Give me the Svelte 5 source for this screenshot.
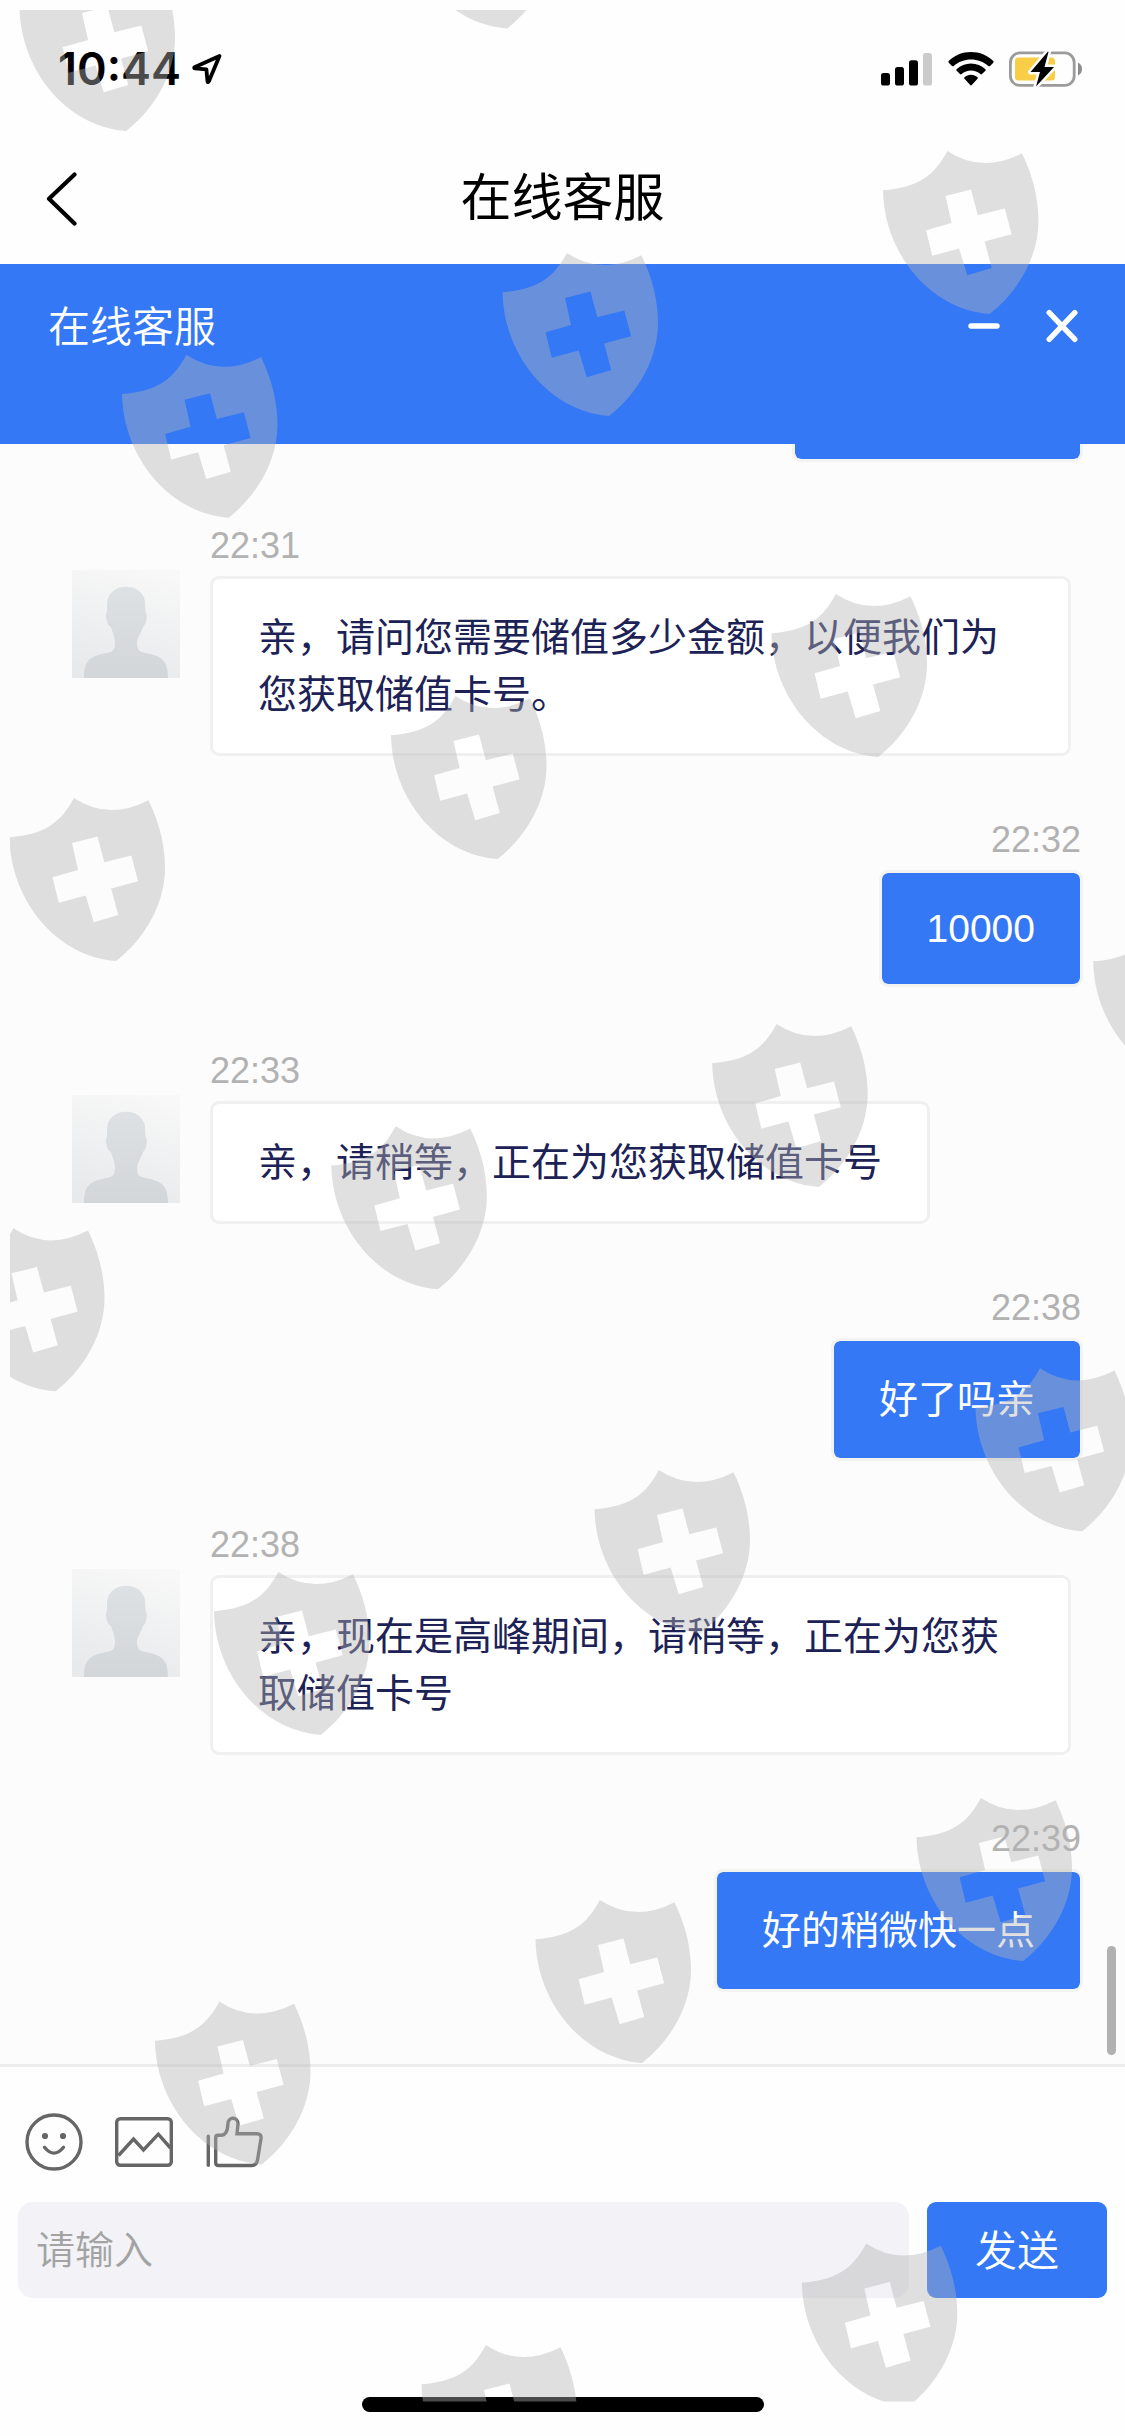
<script lang="ts">
	type Message = { from: 'agent' | 'me'; time: string; text: string; latin?: boolean };

	const messages: Message[] = [
		{ from: 'agent', time: '22:31', text: '亲，请问您需要储值多少金额，以便我们为您获取储值卡号。' },
		{ from: 'me', time: '22:32', text: '10000', latin: true },
		{ from: 'agent', time: '22:33', text: '亲，请稍等，正在为您获取储值卡号' },
		{ from: 'me', time: '22:38', text: '好了吗亲' },
		{ from: 'agent', time: '22:38', text: '亲，现在是高峰期间，请稍等，正在为您获取储值卡号' },
		{ from: 'me', time: '22:39', text: '好的稍微快一点' }
	];

	// ── shield overlay, offsets of each stamp ────────────────────────────────
	const shields = [
		[19.5, -32],
		[400.5, -134.5],
		[883, 151],
		[502.5, 253],
		[122, 354.7],
		[771.5, 594],
		[391, 696],
		[9.5, 798],
		[1093.2, 922],
		[712.2, 1024],
		[331.3, 1126.3],
		[-51, 1228.3],
		[975.5, 1368.3],
		[594.5, 1470],
		[214, 1572],
		[916.5, 1798],
		[535.5, 1900],
		[155, 2001.5],
		[801.8, 2243.5],
		[421.5, 2345]
	];

	let draft = $state('');
</script>

<div class="phone">
	<!-- status bar -->
	<div class="status">
		<span class="clock">10:44</span>
		<svg class="location" width="32" height="34" viewBox="0 0 32 34">
			<path d="M28.5 4 L3.5 15.2 Q2.6 16 4 16.3 L15.4 17.4 L16.5 29.5 Q17 30.8 17.8 29.4 Z" />
		</svg>
		<div class="indicators">
			<svg width="52" height="34" viewBox="0 0 52 34">
				<rect x="0" y="21" width="9" height="12.5" rx="2.6" />
				<rect x="14" y="15" width="9" height="18.5" rx="2.6" />
				<rect x="28" y="8.3" width="9" height="25.2" rx="2.6" />
				<rect x="42" y="1" width="9" height="32.5" rx="2.6" fill="#cbcbcb" />
			</svg>
			<svg width="46" height="34" viewBox="0 0 46 34">
				<path d="M23 0 C31.500 0 39.500 3.300 45.300 9 Q46 9.900 45.300 10.700 L42 14 Q41.200 14.700 40.300 14 C35.600 9.700 29.500 7.400 23 7.400 C16.500 7.400 10.400 9.700 5.700 14 Q4.800 14.700 4 14 L0.700 10.700 Q0 9.900 0.700 9 C6.500 3.300 14.500 0 23 0 Z" />
				<path d="M23 11.400 C28.500 11.400 33.500 13.500 37.400 17.200 Q38.200 18 37.400 18.800 L34 22.100 Q33.200 22.800 32.400 22.100 C29.800 19.900 26.500 18.600 23 18.600 C19.500 18.600 16.200 19.900 13.600 22.100 Q12.800 22.800 12 22.100 L8.600 18.800 Q7.800 18 8.600 17.200 C12.500 13.500 17.500 11.400 23 11.400 Z" />
				<path d="M23 22.800 C25.500 22.800 27.700 23.700 29.500 25.200 Q30.300 26 29.500 26.800 L23.800 33 Q23 33.800 22.200 33 L16.500 26.800 Q15.700 26 16.500 25.200 C18.300 23.700 20.500 22.800 23 22.800 Z" />
			</svg>
			<svg width="74" height="36" viewBox="0 0 74 36">
				<rect x="1.400" y="1.900" width="63.800" height="32.500" rx="9.500" fill="none" stroke="#9b9b9b" stroke-width="2.800" />
				<path d="M69 11.500 Q73 13.500 73 18 Q73 22.500 69 24.500 Z" fill="#8c8c8c" />
				<rect x="6" y="6.600" width="40" height="23" rx="3.500" fill="#f8ce46" />
				<path class="bolt" d="M39 0.500 L21.500 21 L31 21 L27 35.500 L45 16 L35.500 16 L39.500 1 Z" />
			</svg>
		</div>
	</div>

	<!-- page title -->
	<div class="nav">
		<button class="back" aria-label="返回">
			<svg width="34" height="56" viewBox="0 0 34 56">
				<path d="M29.500 4.500 L4 28.800 L29.500 53.500" />
			</svg>
		</button>
		<h1>在线客服</h1>
	</div>

	<!-- chat header -->
	<div class="chat-header">
		<span class="chat-title">在线客服</span>
		<div class="window-actions">
			<button aria-label="最小化">
				<svg width="34" height="34" viewBox="0 0 34 34"><path d="M4 17 H30" /></svg>
			</button>
			<button aria-label="关闭">
				<svg width="34" height="34" viewBox="0 0 34 34"><path d="M4.200 3.700 L29.800 30.300 M29.800 3.700 L4.200 30.300" /></svg>
			</button>
		</div>
	</div>

	<!-- messages -->
	<div class="messages">
		<div class="scrolled-bubble"></div>
		{#each messages as m}
			<div class="message {m.from}">
				{#if m.from === 'agent'}
					<svg class="avatar" width="108" height="108" viewBox="0 0 108 108">
						<defs>
							<linearGradient id="photo" x1="0.700" y1="0" x2="0.400" y2="1">
								<stop offset="0" stop-color="#f8f8f8" />
								<stop offset="1" stop-color="#e7e9eb" />
							</linearGradient>
							<linearGradient id="person" x1="0" y1="0" x2="0" y2="1">
								<stop offset="0" stop-color="#dde1e4" />
								<stop offset="1" stop-color="#d2d6d9" />
							</linearGradient>
						</defs>
						<rect width="108" height="108" fill="url(#photo)" />
						<path
							fill="url(#person)"
							d="M51 17 C60 16 71 20 73 31 L73.500 42 Q75.500 44 74.500 49 Q73.500 55 71 57 C69 64 65 67 65 73 C65 82 69 82 78 84 C91 87 96 92 96 108 L12 108 C12 92 17 87 30 84 C39 82 43 82 43 73 C43 67 41 64 39 57 Q34.500 54 34.500 49 Q33 44 35 42 L35 33 C36 24 42 18 51 17 Z"
						/>
					</svg>
				{/if}
				<div class="content">
					<time>{m.time}</time>
					<div class="bubble" class:latin={m.latin}>{m.text}</div>
				</div>
			</div>
		{/each}
		<div class="scrollbar"></div>
	</div>

	<!-- composer -->
	<div class="composer">
		<div class="tools">
			<button aria-label="表情">
				<svg width="60" height="60" viewBox="0 0 60 60">
					<circle cx="30" cy="30" r="27" />
					<circle class="eye" cx="21" cy="24" r="3.100" />
					<circle class="eye" cx="39" cy="24" r="3.100" />
					<path d="M20.500 35.200 Q30 47 39.500 35.200" stroke-linecap="round" />
				</svg>
			</button>
			<button aria-label="图片">
				<svg width="60" height="60" viewBox="0 0 60 60">
					<rect x="2.700" y="6.700" width="54.600" height="46.600" rx="3.500" />
					<path d="M4.500 43.500 L19.500 27 L29.500 38 L44.300 22.200 L56.500 36" />
				</svg>
			</button>
			<button aria-label="点赞">
				<svg width="60" height="60" viewBox="0 0 60 60">
					<path d="M4.300 24.200 V53.200" stroke-linecap="round" />
					<path d="M14 23.300 H17 C22 23.300 23.700 17.500 23.900 12 C24 4.300 34 4.500 34 12 L33 21.700 H53 Q57.500 21.700 57 26.500 L53.500 48 Q52.500 53.500 47.500 53.500 H14.500 Q11.700 53.500 11.700 50.500 V26 Q11.700 23.300 14 23.300 Z" />
				</svg>
			</button>
		</div>
		<div class="entry">
			<input type="text" placeholder="请输入" bind:value={draft} />
			<button class="send">发送</button>
		</div>
	</div>

	<div class="home-indicator"></div>

	<svg class="overlay" width="1125" height="2436" viewBox="0 0 1125 2436" aria-hidden="true">
		<defs>
			<clipPath id="overlay-area"><rect x="10" y="10" width="1115" height="2391.500" /></clipPath>
		</defs>
		<g clip-path="url(#overlay-area)">
			{#each shields as [x, y]}
				<path
					transform="translate({x} {y})"
					fill-rule="evenodd"
					d="M64.400 0 Q99 23 139 2.300 C151 27 155.500 50 155.500 70 C155.500 105 136 140 106.700 163 C48 159 1 103 0 39.300 C35 36.500 51 25 64.400 0 Z M62.500 45 L88 38.600 L94.800 64.300 L121.800 57.500 L128.600 83.300 L101.600 90.600 L108.800 117 L84.200 124.300 L76.200 97.600 L49.200 104.700 L43.100 79.300 L68.600 72 Z"
				/>
			{/each}
		</g>
	</svg>
</div>

<style>
	:global(body) {
		margin: 0;
		background: #fff;
	}

	.phone {
		position: relative;
		display: flex;
		flex-direction: column;
		width: 1125px;
		height: 2436px;
		overflow: hidden;
		background: #fefefe;
		font-family: 'Liberation Sans', 'Noto Sans CJK SC', sans-serif;
	}

	button {
		display: flex;
		padding: 0;
		border: none;
		background: none;
		font: inherit;
	}

	/* ── status bar ── */
	.status {
		display: flex;
		align-items: center;
		box-sizing: border-box;
		height: 132px;
		padding: 6px 42px 0 58px;
		flex-shrink: 0;
	}

	.clock {
		margin-top: -2px;
		font-family: Inter, sans-serif;
		font-size: 45px;
		font-weight: 600;
		letter-spacing: 0;
	}

	.location {
		margin-left: 10px;
		fill: none;
		stroke: #000;
		stroke-width: 3.8;
		stroke-linejoin: round;
	}

	.indicators {
		display: flex;
		align-items: center;
		gap: 15px;
		margin-left: auto;
	}

	.bolt {
		stroke: #fefefe;
		stroke-width: 5;
		stroke-linejoin: round;
		paint-order: stroke;
	}

	/* ── title row ── */
	.nav {
		display: flex;
		align-items: center;
		justify-content: center;
		position: relative;
		height: 132px;
		flex-shrink: 0;
	}

	.back {
		position: absolute;
		left: 45px;
	}

	.back svg {
		fill: none;
		stroke: #000;
		stroke-width: 4.2;
		stroke-linecap: round;
		stroke-linejoin: round;
	}

	h1 {
		margin: 2px 0 0;
		font-size: 51px;
		font-weight: 400;
		line-height: 72px;
	}

	/* ── chat header ── */
	.chat-header {
		display: flex;
		justify-content: space-between;
		box-sizing: border-box;
		height: 180px;
		padding: 32px 46px 0 48px;
		background: #3478f6;
		color: #fff;
		flex-shrink: 0;
	}

	.chat-title {
		font-size: 42px;
		font-weight: 350;
		line-height: 64px;
	}

	.window-actions {
		display: flex;
		align-items: center;
		gap: 44px;
		height: 60px;
	}

	.window-actions svg {
		fill: none;
		stroke: #fff;
		stroke-width: 5.4;
		stroke-linecap: round;
	}

	/* ── messages ── */
	.messages {
		position: relative;
		display: flex;
		flex-direction: column;
		gap: 62px;
		height: 1620px;
		background: #fcfcfc;
		flex-shrink: 0;
	}

	.scrolled-bubble {
		align-self: flex-end;
		width: 285px;
		height: 15px;
		margin-right: 42px;
		border: 3px solid #f3f3f1;
		border-top: none;
		border-radius: 0 0 9px 9px;
		background: #3478f6;
		background-clip: padding-box;
	}

	.message {
		display: flex;
		align-items: flex-start;
	}

	.message.agent {
		gap: 30px;
		padding: 0 54px 0 72px;
	}

	.message.me {
		justify-content: flex-end;
		padding-right: 42px;
	}

	.avatar {
		margin-top: 46px;
		flex-shrink: 0;
	}

	.content {
		display: flex;
		flex-direction: column;
		align-items: flex-start;
	}

	.me .content {
		align-items: flex-end;
	}

	time {
		margin-bottom: 8px;
		color: #b2b2b2;
		font-size: 36px;
		line-height: 44px;
	}

	.me time {
		margin-right: 2px;
	}

	.bubble {
		padding: 30px 45px;
		border: 3px solid #f0f0f0;
		border-radius: 9px;
		background: #fff;
		color: #1d2256;
		font-size: 39px;
		font-weight: 400;
		line-height: 57px;
		text-spacing-trim: space-all;
	}

	.me .bubble {
		border-color: #f3f3f1;
		background: #3478f6;
		background-clip: padding-box;
		color: #fff;
	}

	.bubble.latin {
		line-height: 51px;
	}

	.scrollbar {
		position: absolute;
		right: 9px;
		bottom: 9px;
		width: 9px;
		height: 109px;
		border-radius: 5px;
		background: #b1b1b1;
	}

	/* ── composer ── */
	.composer {
		border-top: 3px solid #ececec;
		padding: 45px 18px 0;
	}

	.tools {
		display: flex;
		gap: 30px;
		padding-left: 6px;
	}

	.tools svg {
		fill: none;
		stroke: #666;
		stroke-width: 3.4;
	}

	.tools .eye {
		fill: #666;
		stroke: none;
	}

	.entry {
		display: flex;
		gap: 18px;
		margin-top: 30px;
	}

	input {
		flex: 1;
		box-sizing: border-box;
		height: 96px;
		padding: 2px 18px 0;
		border: none;
		border-radius: 15px;
		background: #f2f2f7;
		font: inherit;
		font-size: 39px;
		font-weight: 350;
	}

	input::placeholder {
		color: #a3a3a3;
		opacity: 1;
	}

	.send {
		align-items: center;
		justify-content: center;
		box-sizing: border-box;
		width: 180px;
		height: 96px;
		padding-bottom: 5px;
		border-radius: 9px;
		background: #3478f6;
		color: #fff;
		font-size: 42px;
		font-weight: 350;
	}

	.home-indicator {
		align-self: center;
		width: 402px;
		height: 15px;
		margin: auto 0 24px;
		border-radius: 8px;
		background: #000;
	}

	/* ── shield overlay ── */
	.overlay {
		position: absolute;
		inset: 0;
		fill: #b4b4b4;
		fill-opacity: 0.41;
		pointer-events: none;
	}
</style>
